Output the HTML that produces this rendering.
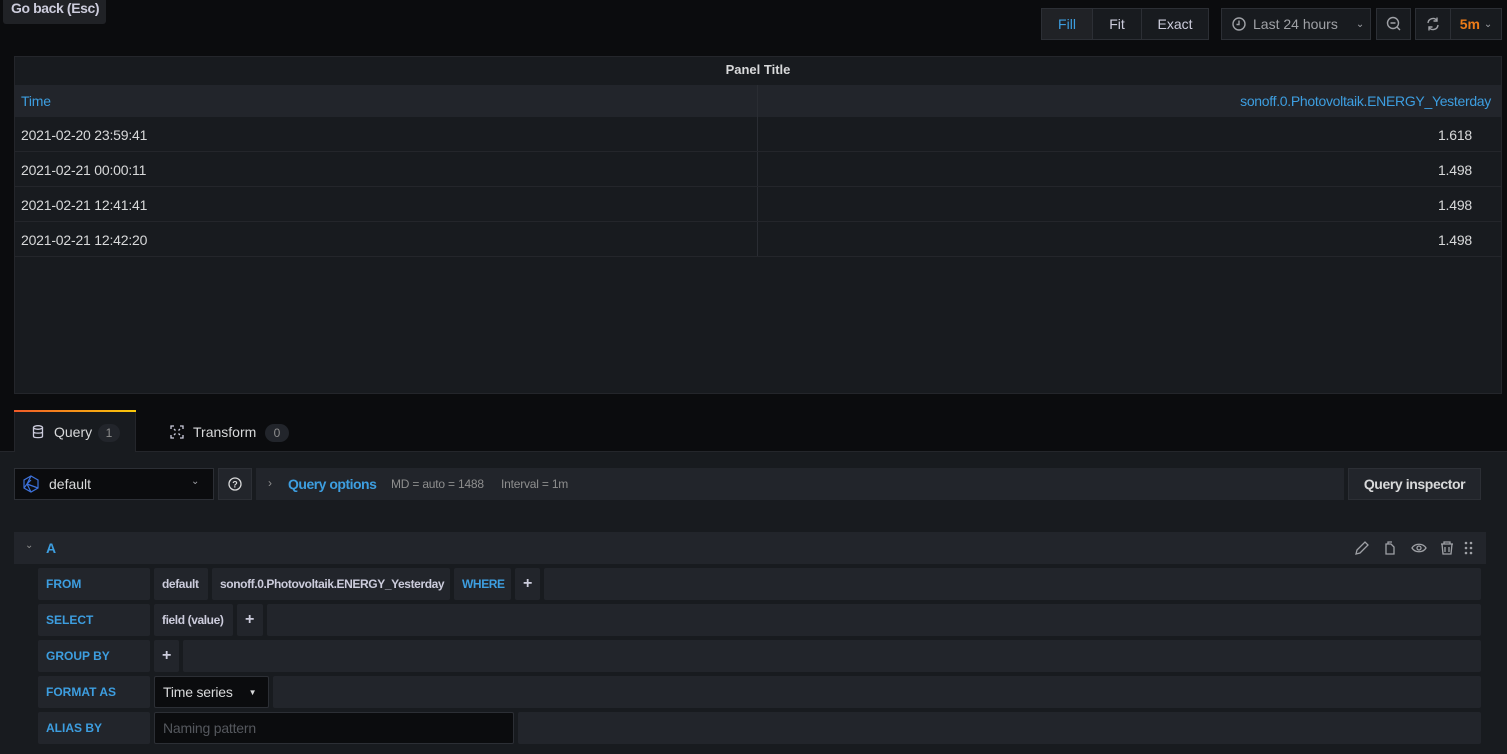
<!DOCTYPE html>
<html><head><style>
*{box-sizing:border-box;margin:0;padding:0}
body{width:1507px;height:754px;background:#0b0c0e;font-family:"Liberation Sans",sans-serif;color:#ccccdc;position:relative;overflow:hidden;font-size:14px}
.a{position:absolute;white-space:nowrap}
.btn{position:absolute;top:8px;height:32px;border:1px solid #2c2f35;background:#181b1f;color:#ccccdc;display:flex;align-items:center;justify-content:center;font-size:14px;white-space:nowrap}
.row{position:absolute;left:15px;width:1486px;height:35px;border-bottom:1px solid #24262b;font-size:14px;color:#d8d9da;letter-spacing:-0.2px}
.row span{position:absolute;top:10px}
.seg{position:absolute;height:32px;background:#22252b;border-radius:2px;display:flex;align-items:center;padding:0 8px;font-size:12px;font-weight:bold;color:#ccccdc;white-space:nowrap;letter-spacing:-0.4px;overflow:hidden}
.lbl{color:#3d9ee0;padding-left:8px;letter-spacing:0}
</style></head><body>
<div class="a" style="left:3px;top:-4px;width:103px;height:28px;background:#202226;border-radius:3px;font-size:14px;font-weight:bold;color:#ccccdc;padding:4px 8px;letter-spacing:-0.4px">Go back (Esc)</div>

<div class="btn" style="left:1041px;width:52px;color:#3d9ee0;background:#202226">Fill</div>
<div class="btn" style="left:1092px;width:50px">Fit</div>
<div class="btn" style="left:1141px;width:68px">Exact</div>
<div class="btn" style="left:1221px;width:150px;justify-content:flex-start;padding-left:10px">
<svg width="14" height="14" viewBox="0 0 14 14"><circle cx="7" cy="7" r="6" fill="none" stroke="#9fa1a6" stroke-width="1.4"/><path d="M7 3.5V7.5H4.5" fill="none" stroke="#9fa1a6" stroke-width="1.4"/></svg>
<span style="margin-left:7px;color:#9fa1a6">Last 24 hours</span><span style="margin-left:18px;color:#9fa1a6;font-size:10px">&#8964;</span></div>
<div class="btn" style="left:1376px;width:35px"><svg width="16" height="16" viewBox="0 0 16 16"><circle cx="7" cy="7" r="5.5" fill="none" stroke="#9fa1a6" stroke-width="1.4"/><path d="M4.5 7H9.5M11 11L14 14" stroke="#9fa1a6" stroke-width="1.4"/></svg></div>
<div class="btn" style="left:1415px;width:36px"><svg width="16" height="16" viewBox="0 0 16 16"><path d="M3 7A5 5 0 0 1 12 4.5M13 9A5 5 0 0 1 4 11.5" fill="none" stroke="#9fa1a6" stroke-width="1.4"/><path d="M12 1.5V5H8.5M4 14.5V11H7.5" fill="none" stroke="#9fa1a6" stroke-width="1.4"/></svg></div>
<div class="btn" style="left:1450px;width:52px;color:#eb7b18;font-weight:bold">5m <span style="color:#9fa1a6;font-size:10px;margin-left:4px;font-weight:normal">&#8964;</span></div>

<div class="a" style="left:14px;top:56px;width:1488px;height:338px;background:#181b1f;border:1px solid #24262b"></div>
<div class="a" style="left:15px;top:62px;width:1486px;text-align:center;font-size:13px;font-weight:bold;color:#d8d9da">Panel Title</div>
<div class="a" style="left:15px;top:85px;width:1486px;height:32px;background:#22252b"></div>
<div class="a" style="left:757px;top:85px;width:1px;height:172px;background:#2a2d33"></div>
<div class="a" style="left:21px;top:93px;color:#3d9ee0;letter-spacing:-0.2px">Time</div>
<div class="a" style="right:16px;top:93px;color:#3d9ee0;letter-spacing:-0.3px">sonoff.0.Photovoltaik.ENERGY_Yesterday</div>
<div class="row" style="top:117px"><span style="left:6px">2021-02-20 23:59:41</span><span style="right:29px">1.618</span></div>
<div class="row" style="top:152px"><span style="left:6px">2021-02-21 00:00:11</span><span style="right:29px">1.498</span></div>
<div class="row" style="top:187px"><span style="left:6px">2021-02-21 12:41:41</span><span style="right:29px">1.498</span></div>
<div class="row" style="top:222px"><span style="left:6px">2021-02-21 12:42:20</span><span style="right:29px">1.498</span></div>

<div class="a" style="left:0;top:451px;width:1507px;height:303px;background:#181b1f;border-top:1px solid #24262b"></div>
<div class="a" style="left:14px;top:410px;width:122px;height:42px;background:#181b1f;border:1px solid #24262b;border-bottom:none"></div>
<div class="a" style="left:14px;top:410px;width:122px;height:2px;background:linear-gradient(90deg,#f05a28,#fbca0a)"></div>
<div class="a" style="left:32px;top:425px"><svg width="12" height="14" viewBox="0 0 12 14"><ellipse cx="6" cy="2.5" rx="4.5" ry="1.8" fill="none" stroke="#ccccdc" stroke-width="1.3"/><path d="M1.5 2.5V11.5C1.5 13 10.5 13 10.5 11.5V2.5M1.5 7C1.5 8.5 10.5 8.5 10.5 7" fill="none" stroke="#ccccdc" stroke-width="1.3"/></svg></div>
<div class="a" style="left:54px;top:424px;color:#d8d9da">Query</div>
<div class="a" style="left:98px;top:424px;width:22px;height:18px;border-radius:9px;background:#22252b;font-size:12px;color:#8e8e8e;text-align:center;line-height:18px">1</div>
<div class="a" style="left:170px;top:425px"><svg width="14" height="14" viewBox="0 0 14 14" fill="none" stroke="#ccccdc" stroke-width="1.3"><path d="M1 4V1H4M10 1H13V4M13 10V13H10M4 13H1V10M4 4L5.5 5.5M10 4L8.5 5.5M4 10L5.5 8.5M10 10L8.5 8.5"/></svg></div>
<div class="a" style="left:193px;top:424px;color:#d8d9da">Transform</div>
<div class="a" style="left:265px;top:424px;width:24px;height:18px;border-radius:9px;background:#22252b;font-size:12px;color:#8e8e8e;text-align:center;line-height:18px">0</div>

<div class="a" style="left:14px;top:468px;width:200px;height:32px;background:#0b0c0e;border:1px solid #2c2f35"></div>
<div class="a" style="left:22px;top:475px"><svg width="18" height="18" viewBox="0 0 18 18" fill="none" stroke="#3d71d9" stroke-width="1.2"><path d="M9 1L16 5L16 13L9 17L2 13L2 5Z M9 1L5 9L2 13M5 9L16 13M5 9L9 17M9 5L5 9"/></svg></div>
<div class="a" style="left:49px;top:476px;color:#d8d9da">default</div>
<div class="a" style="left:191px;top:476px;font-size:10px;color:#9fa1a6">&#8964;</div>
<div class="a" style="left:218px;top:468px;width:34px;height:32px;background:#22252b;border:1px solid #2c2f35;display:flex;align-items:center;justify-content:center"><svg width="14" height="14" viewBox="0 0 14 14"><circle cx="7" cy="7" r="6" fill="none" stroke="#d8d9da" stroke-width="1.3"/><text x="7" y="10.5" font-size="9" font-weight="bold" text-anchor="middle" fill="#d8d9da" font-family="Liberation Sans">?</text></svg></div>
<div class="a" style="left:256px;top:468px;width:1088px;height:32px;background:#22252b"></div>
<div class="a" style="left:268px;top:476px;color:#8e8e8e;font-size:12px">&#8250;</div>
<div class="a" style="left:288px;top:476px;color:#3d9ee0;font-weight:bold;font-size:14px;letter-spacing:-0.5px">Query options</div>
<div class="a" style="left:391px;top:477px;color:#8e8e8e;font-size:12px;letter-spacing:-0.2px">MD = auto = 1488</div>
<div class="a" style="left:501px;top:477px;color:#8e8e8e;font-size:12px;letter-spacing:-0.2px">Interval = 1m</div>
<div class="a" style="left:1348px;top:468px;width:133px;height:32px;background:#22252b;border:1px solid #2c2f35;font-size:14px;font-weight:bold;color:#d8d9da;text-align:center;line-height:30px;letter-spacing:-0.4px">Query inspector</div>

<div class="a" style="left:14px;top:532px;width:1472px;height:32px;background:#22252b"></div>
<div class="a" style="left:25px;top:540px;color:#8e8e8e;font-size:10px">&#8964;</div>
<div class="a" style="left:46px;top:540px;color:#3d9ee0;font-weight:bold">A</div>
<svg class="a" style="left:1354px;top:540px" width="124" height="16" viewBox="0 0 124 16" fill="none" stroke="#9fa1a6" stroke-width="1.3">
<path d="M2 14L3 10L11 2L14 5L6 13Z"/>
<path d="M32 4H37L40 7V14H32Z M34 4V2H38"/>
<path d="M58 8C61 3 69 3 72 8C69 13 61 13 58 8Z"/><circle cx="65" cy="8" r="2"/>
<path d="M87 4H99M90 4V2H96V4M88 4L89 14H97L98 4M91 7V12M95 7V12"/>
<g fill="#9fa1a6" stroke="none"><circle cx="112" cy="3" r="1.3"/><circle cx="117" cy="3" r="1.3"/><circle cx="112" cy="8" r="1.3"/><circle cx="117" cy="8" r="1.3"/><circle cx="112" cy="13" r="1.3"/><circle cx="117" cy="13" r="1.3"/></g>
</svg>

<div class="seg lbl" style="left:38px;top:568px;width:112px">FROM</div>
<div class="seg" style="left:154px;top:568px;width:54px">default</div>
<div class="seg" style="left:212px;top:568px;width:238px">sonoff.0.Photovoltaik.ENERGY_Yesterday</div>
<div class="seg" style="left:454px;top:568px;width:57px;color:#3d9ee0">WHERE</div>
<div class="seg" style="left:515px;top:568px;width:25px;font-size:16px">+</div>
<div class="seg" style="left:544px;top:568px;width:937px"></div>

<div class="seg lbl" style="left:38px;top:604px;width:112px">SELECT</div>
<div class="seg" style="left:154px;top:604px;width:79px">field (value)</div>
<div class="seg" style="left:237px;top:604px;width:26px;font-size:16px">+</div>
<div class="seg" style="left:267px;top:604px;width:1214px"></div>

<div class="seg lbl" style="left:38px;top:640px;width:112px">GROUP BY</div>
<div class="seg" style="left:154px;top:640px;width:25px;font-size:16px">+</div>
<div class="seg" style="left:183px;top:640px;width:1298px"></div>

<div class="seg lbl" style="left:38px;top:676px;width:112px">FORMAT AS</div>
<div class="seg" style="left:154px;top:676px;width:115px;background:#0b0c0e;border:1px solid #2c2f35;font-weight:normal;font-size:14px;color:#d8d9da;letter-spacing:-0.2px">Time series<span style="margin-left:16px;font-size:8px">&#9660;</span></div>
<div class="seg" style="left:273px;top:676px;width:1208px"></div>

<div class="seg lbl" style="left:38px;top:712px;width:112px">ALIAS BY</div>
<div class="seg" style="left:154px;top:712px;width:360px;background:#0b0c0e;border:1px solid #2c2f35;font-weight:normal;font-size:14px;color:#55585e;letter-spacing:-0.2px">Naming pattern</div>
<div class="seg" style="left:518px;top:712px;width:963px"></div>
</body></html>
